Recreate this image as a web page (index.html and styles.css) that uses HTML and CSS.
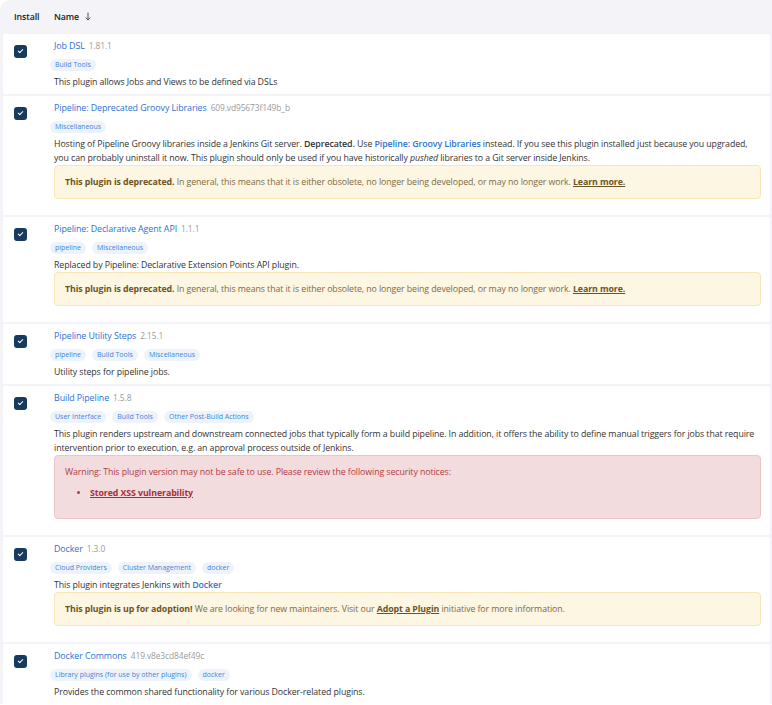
FILE: index.html
```html
<!DOCTYPE html>
<html lang="en">
<head>
    <meta charset="UTF-8">
    <title>Plugins</title>
    <link rel="stylesheet" href="styles.css">
</head>
<body>
    <div class="plugin-table">
        <!-- 表头 -->
        <div class="table-head">
            <div class="col-install">Install</div>
            <div class="col-name">Name
                <svg class="sort-arrow" width="6" height="9" viewBox="0 0 6 9"><path d="M3 0.5V8M0.8 5.6L3 8L5.2 5.6" fill="none" stroke="#555" stroke-width="1"/></svg>
            </div>
        </div>

        <div class="plugin-row">
            <div class="col-install"><span class="checkbox"></span></div>
            <div class="col-name">
                <div class="plugin-title"><a href="#">Job DSL</a><span class="version">1.81.1</span></div>
                <div class="labels"><a href="#" class="label">Build Tools</a></div>
                <div class="excerpt">This plugin allows Jobs and Views to be defined via DSLs</div>
            </div>
        </div>

        <div class="plugin-row">
            <div class="col-install"><span class="checkbox"></span></div>
            <div class="col-name">
                <div class="plugin-title"><a href="#">Pipeline: Deprecated Groovy Libraries</a><span class="version">609.vd95673f149b_b</span></div>
                <div class="labels"><a href="#" class="label">Miscellaneous</a></div>
                <div class="excerpt">Hosting of Pipeline Groovy libraries inside a Jenkins Git server. <b>Deprecated.</b> Use <a href="#"><b>Pipeline: Groovy Libraries</b></a> instead. If you see this plugin installed just because you upgraded, you can probably uninstall it now. This plugin should only be used if you have historically <em>pushed</em> libraries to a Git server inside Jenkins.</div>
                <div class="alert alert-warning"><b>This plugin is deprecated.</b> In general, this means that it is either obsolete, no longer being developed, or may no longer work. <a href="#">Learn more.</a></div>
            </div>
        </div>

        <div class="plugin-row">
            <div class="col-install"><span class="checkbox"></span></div>
            <div class="col-name">
                <div class="plugin-title"><a href="#">Pipeline: Declarative Agent API</a><span class="version">1.1.1</span></div>
                <div class="labels"><a href="#" class="label">pipeline</a><a href="#" class="label">Miscellaneous</a></div>
                <div class="excerpt">Replaced by Pipeline: Declarative Extension Points API plugin.</div>
                <div class="alert alert-warning"><b>This plugin is deprecated.</b> In general, this means that it is either obsolete, no longer being developed, or may no longer work. <a href="#">Learn more.</a></div>
            </div>
        </div>

        <div class="plugin-row">
            <div class="col-install"><span class="checkbox"></span></div>
            <div class="col-name">
                <div class="plugin-title"><a href="#">Pipeline Utility Steps</a><span class="version">2.15.1</span></div>
                <div class="labels"><a href="#" class="label">pipeline</a><a href="#" class="label">Build Tools</a><a href="#" class="label">Miscellaneous</a></div>
                <div class="excerpt">Utility steps for pipeline jobs.</div>
            </div>
        </div>

        <div class="plugin-row">
            <div class="col-install"><span class="checkbox"></span></div>
            <div class="col-name">
                <div class="plugin-title"><a href="#">Build Pipeline</a><span class="version">1.5.8</span></div>
                <div class="labels"><a href="#" class="label">User Interface</a><a href="#" class="label">Build Tools</a><a href="#" class="label">Other Post-Build Actions</a></div>
                <div class="excerpt">This plugin renders upstream and downstream connected jobs that typically form a build pipeline. In addition, it offers the ability to define manual triggers for jobs that require intervention prior to execution, e.g. an approval process outside of Jenkins.</div>
                <div class="alert alert-danger">
                    Warning: This plugin version may not be safe to use. Please review the following security notices:
                    <ul>
                        <li><a href="#">Stored XSS vulnerability</a></li>
                    </ul>
                </div>
            </div>
        </div>

        <div class="plugin-row">
            <div class="col-install"><span class="checkbox"></span></div>
            <div class="col-name">
                <div class="plugin-title"><a href="#">Docker</a><span class="version">1.3.0</span></div>
                <div class="labels"><a href="#" class="label">Cloud Providers</a><a href="#" class="label">Cluster Management</a><a href="#" class="label">docker</a></div>
                <div class="excerpt">This plugin integrates Jenkins with <a href="#"><b>Docker</b></a></div>
                <div class="alert alert-warning"><b>This plugin is up for adoption!</b> We are looking for new maintainers. Visit our <a href="#">Adopt a Plugin</a> initiative for more information.</div>
            </div>
        </div>

        <div class="plugin-row">
            <div class="col-install"><span class="checkbox"></span></div>
            <div class="col-name">
                <div class="plugin-title"><a href="#">Docker Commons</a><span class="version">419.v8e3cd84ef49c</span></div>
                <div class="labels"><a href="#" class="label">Library plugins (for use by other plugins)</a><a href="#" class="label">docker</a></div>
                <div class="excerpt">Provides the common shared functionality for various Docker-related plugins.</div>
            </div>
        </div>
    </div>
</body>
</html>
```

FILE: styles.css
```css
/* 基础样式 */
body {
    margin: 0;
    font-family: "Open Sans", "Noto Sans CJK KR", sans-serif;
    font-size: 8.8px;
    letter-spacing: -0.09px;
    color: #333;
    background: #fff;
}

a {
    text-decoration: none;
}

b {
    font-weight: 600;
}

/* 表格 */
.plugin-table {
    background: #f4f4f8;
    border-radius: 10px 0 0 0;
    padding: 0 2px 0 3px;
}

.table-head {
    display: flex;
    align-items: center;
    height: 34px;
    font-weight: 600;
    color: #222;
}

.table-head .col-install {
    padding: 0 0 0 11px;
}

.sort-arrow {
    margin-left: 4px;
    vertical-align: -1px;
}

.plugin-row {
    display: flex;
    background: #fff;
    margin-bottom: 2px;
}

.col-install {
    width: 40px;
    padding: 11px 0 0 11px;
    flex-shrink: 0;
}

.col-name {
    flex: 1;
    padding: 5px 9px 5px 0;
    line-height: 14px;
}

/* 复选框 */
.checkbox {
    display: block;
    position: relative;
    width: 13px;
    height: 13px;
    border-radius: 3px;
    background: #173a5e;
}

.checkbox::after {
    content: "";
    position: absolute;
    left: 4px;
    top: 3.5px;
    width: 4px;
    height: 2px;
    border-left: 1.4px solid #fff;
    border-bottom: 1.4px solid #fff;
    transform: rotate(-45deg);
}

.plugin-title {
    font-size: 8.9px;
    height: 14px;
}

.plugin-title a {
    color: #2b72d4;
}

.version {
    margin-left: 4px;
    color: #9a9a9a;
    font-size: 8.4px;
}

/* 标签 */
.labels {
    display: flex;
    gap: 6px;
    margin: 6px 0 0 -4px;
    height: 12px;
}

.label {
    display: block;
    height: 12px;
    line-height: 12px;
    padding: 0 5px;
    border-radius: 6px;
    background: #eef3fa;
    color: #4085dc;
    font-size: 7px;
    letter-spacing: 0;
}

.excerpt {
    margin-top: 4px;
}

.excerpt a {
    color: #2b72d4;
}

/* 提示框 */
.alert {
    margin: 0 0 11px;
    padding: 9px 10px;
    border: 1px solid;
    border-radius: 4px;
}

.alert-warning {
    background: #fdf6e2;
    border-color: #f8e6b7;
    color: #7d6a45;
}

.alert-warning b,
.alert-warning a {
    color: #6d5424;
    font-weight: 700;
}

.alert-warning a {
    text-decoration: underline;
}

.alert-danger {
    background: #f2dcdd;
    border-color: #ebc5c8;
    color: #b33b45;
    padding-bottom: 10px;
}

.alert-danger ul {
    margin: 7px 0 8px;
    padding-left: 25px;
}

.alert-danger a {
    color: #a82f38;
    font-weight: 700;
    text-decoration: underline;
}
```
